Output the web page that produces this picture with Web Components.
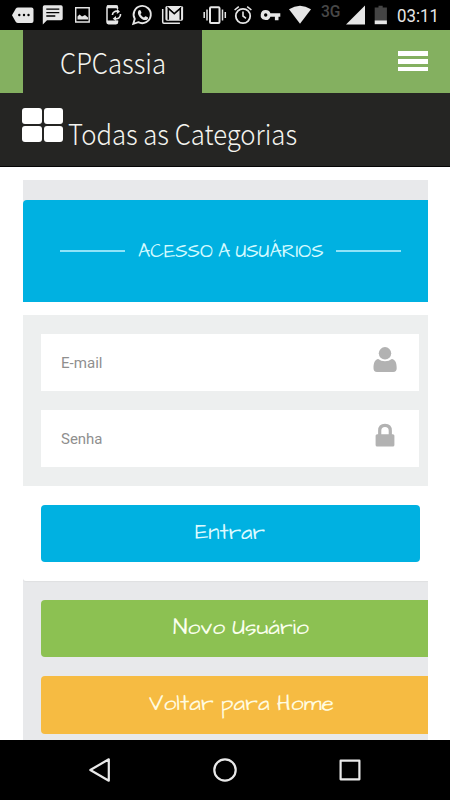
<!DOCTYPE html>
<html lang="pt-BR">
<head>
<meta charset="utf-8">
<title>CPCassia</title>
<style>
html,body{margin:0;padding:0;background:#fff}
body{width:450px;height:800px;overflow:hidden;font-family:Roboto,"Liberation Sans",sans-serif}
</style>
</head>
<body>
<cp-app></cp-app>
<script>
class Base extends HTMLElement {
  constructor() {
    super();
    this.attachShadow({ mode: "open" });
  }
  connectedCallback() {
    this.shadowRoot.innerHTML = "<style>:host{display:block;box-sizing:border-box}svg{display:block;overflow:visible}" + this.css() + "</style>" + this.html();
  }
  css() { return ""; }
  html() { return "<slot></slot>"; }
}

/* One line of text fitted to a width; "base" is the baseline inside the box. */
class FitText extends Base {
  css() {
    return `:host{flex:none;width:${this.getAttribute("w")}px}
    text{fill:currentColor;font-family:inherit;font-size:inherit;font-weight:inherit}`;
  }
  html() {
    const w = this.getAttribute("w"), h = this.getAttribute("h"), b = this.getAttribute("base");
    return `<svg width="${w}" height="${h}"><text x="0" y="${b}" textLength="${w}" lengthAdjust="spacingAndGlyphs">${this.getAttribute("label")}</text></svg>`;
  }
}
customElements.define("fit-text", FitText);

class StatusBar extends Base {
  css() {
    return `:host{display:flex;height:30px;background:#000;color:#e6e6e6;overflow:hidden}
    svg{flex:none;fill:#e6e6e6}.l{fill:none;stroke:#e6e6e6}
    .g{color:#484848;font:500 17px Roboto,sans-serif}.t{color:#e6e6e6;font:400 18.500px Roboto,sans-serif}`;
  }
  html() {
    const i = (x, w, s) => `<svg width="${w}" height="30" viewBox="${x} 0 ${w} 30">${s}</svg>`;
    return i(0, 38, `<path d="M18 7.500h13.500q2 0 2 2v11.500q0 2-2 2H18q-1.500 0-2.300-1.300L12 15.200l3.700-6.400Q16.500 7.500 18 7.500z"/><g fill="#000"><circle cx="19.300" cy="15" r="1.200"/><circle cx="24" cy="15" r="1.200"/><circle cx="28.500" cy="15" r="1.200"/></g>`)
    + i(38, 30, `<path d="M44.500 5.300h16.500q1.700 0 1.700 1.700v11.500q0 1.700-1.700 1.700H47l-4.200 4.300V7q0-1.700 1.700-1.700z"/><path stroke="#000" stroke-width="1.300" d="M46.300 9.200h13M46.300 12.600h13M46.300 16h9"/>`)
    + i(68, 30, `<path class="l" stroke="#aaa" stroke-width="1.400" d="M75.700 7.700h13.500v14.300H75.700z"/><path d="M77.500 19.500v-3l2-2 2.500 2 3-1.500 3 2.500v2z"/>`)
    + i(98, 27, `<path class="l" stroke-width="1.500" d="M117.500 9V7.500q0-1.500-1.500-1.500h-7.500q-1.500 0-1.500 1.500v14.500q0 1.700 1.500 1.700h7.500q1.500 0 1.500-1.700v-1.500"/><path d="M107 5.300h10.500v3H107zM107 20.500h10.500v3H107z"/><path class="l" stroke-width="1.600" d="M112.400 15a4 4 0 0 1 5.500-3.500M120.500 14a4.200 4.200 0 0 1-5.500 4.500"/><path d="m117 8.800 3 3-3.200 2.300zM116 16l-3.300 2.700 3.600 2.600z"/>`)
    + i(125, 32, `<path class="l" stroke-width="1.900" d="m133.300 23.800 1.500-4.900a8.600 8.600 0 1 1 3.500 3.300z"/><path d="M138.600 10.500c.6-.8 1.700-.8 2 .1l.8 1.900c.2.600-.7 1.300-.9 1.700.8 1.500 2 2.600 3.500 3.300.5-.3 1.100-1.500 1.700-1.200l2 1c.7.400.3 1.700-.4 2.200-1.500 1.100-3.500.6-5.500-.6-2-1.400-5.300-5.300-3.200-8.400z"/>`)
    + i(157, 42, `<path class="l" stroke-width="1.500" d="M162.700 9v13q0 1.200 1.200 1.200h16"/><path d="M167 6h14.500q1.600 0 1.600 1.600v11.500q0 1.600-1.600 1.600H167q-1.600 0-1.600-1.600V7.600Q165.400 6 167 6z"/><path fill="none" stroke="#000" stroke-width="1.500" d="M168.300 19.700V8.500l6 5.300 6-5.300v11.200"/><path fill="none" stroke="#000" stroke-width=".7" d="m167 6.800 7.300 6.300 7.300-6.300"/>`)
    + i(199, 32, `<rect class="l" x="210" y="7.300" width="9.500" height="15.600" rx="1" stroke-width="2"/><path class="l" stroke-width="1.500" d="M207 9.500v11M204.200 12v6M222.500 9.500v11M225.300 12v6"/>`)
    + i(231, 27, `<circle class="l" cx="243" cy="16" r="7.200" stroke-width="1.800"/><path class="l" stroke-width="1.600" d="M243 11.500V16l3 2.300M234.600 10l4.200-3.400M251.400 10l-4.200-3.400"/>`)
    + i(258, 26, `<path fill-rule="evenodd" d="M265.700 10a5 5 0 0 1 4.700 3.300h9.900v3.400h-1.800v3.600h-3.600v-3.600h-4.500a5 5 0 1 1-4.700-6.700zm0 3.300a1.700 1.700 0 1 0 0 3.400 1.700 1.700 0 0 0 0-3.400z"/>`)
    + i(284, 37, `<path d="M289 9.300q11-7 22 0L300 23.800z"/>`)
    + `<fit-text class="g" w="19.500" h="30" base="17" label="3G"></fit-text>`
    + i(340.5, 31.5, `<path d="M345.500 24.500 364.500 5.500v19z"/>`)
    + i(372, 24.500, `<path fill="#444" d="M374.700 7.500h3.800V5.700h4.200v1.800h4.200v13H374.700z"/><path d="M374.700 20.400h12.200v3.800h-12.200z"/>`)
    + `<fit-text class="t" w="42" h="30" base="22" label="03:11"></fit-text>`;
  }
}
customElements.define("status-bar", StatusBar);

class SiteHeader extends Base {
  css() {
    return `:host{font-family:"Noto Sans CJK JP","Source Sans Pro","Open Sans",sans-serif;font-weight:200;font-size:28px;color:#f4f4ef}
    .top{height:63px;background:#84b060;display:flex;justify-content:space-between;padding:0 22.500px}
    .brand{width:142px;padding-left:37.500px;background:#252523}
    .menu{width:30px;display:flex;flex-direction:column;gap:3px;padding-top:21px}
    .menu i{height:4.800px;background:#fff}
    .cats{height:74px;background:#252523;border-bottom:1px solid #050505;box-sizing:border-box;display:flex;padding-left:22px}
    .grid{display:grid;grid-template-columns:19.500px 19.500px;grid-template-rows:16px 16px;gap:2.200px;padding-top:15px;width:46px;box-sizing:border-box;align-content:start}
    .grid i{background:#fff;border-radius:3px}`;
  }
  html() {
    return `<div class="top"><div class="brand"><fit-text w="106" h="63" base="44" label="CPCassia"></fit-text></div><div class="menu"><i></i><i></i><i></i></div></div>
    <div class="cats"><div class="grid"><i></i><i></i><i></i><i></i></div><fit-text w="229" h="73" base="52" label="Todas as Categorias"></fit-text></div>`;
  }
}
customElements.define("site-header", SiteHeader);

class PanelTitle extends Base {
  css() {
    return `:host{height:102px;background:#00b1e1;border-radius:4px 0 0 0;color:#d3faff;display:flex;padding-left:37.500px;font-size:19px;word-spacing:-2.500px}
    i{width:65px;height:2px;background:#8fe3f8;margin-top:50px}
    fit-text{margin:0 13px 0 12.500px}`;
  }
  html() { return `<i></i><fit-text w="185.500" h="102" base="56.500" label="ACESSO A USUÁRIOS"></fit-text><i></i>`; }
}
customElements.define("panel-title", PanelTitle);

class FormField extends Base {
  css() {
    return `:host{height:57.300px;background:#fff;display:flex;justify-content:space-between;padding:0 22px 0 20px;color:#8f8f8f;font:400 15px Roboto,sans-serif}
    svg{fill:#b2b2b2}`;
  }
  html() {
    const icon = this.getAttribute("icon") === "user"
      ? `<circle cx="12" cy="19.300" r="6.200"/><path d="M5.200 25Q8 27.300 12 27.300t6.800-2.300c3.500.5 4.900 3.800 4.900 9.300q0 3.700-3.500 3.700H4q-3.500 0-3.500-3.700c0-5.500 1.400-8.800 4.700-9.300z"/>`
      : `<rect x="2.600" y="24.200" width="18.800" height="12.200" rx="1.500"/><path d="M6.700 25v-4.300q0-5.300 5.300-5.300t5.300 5.300V25" fill="none" stroke="#b2b2b2" stroke-width="3.200"/>`;
    return `<fit-text w="${this.getAttribute("w")}" h="57" base="33.800" label="${this.getAttribute("label")}"></fit-text><svg width="24" height="57">${icon}</svg>`;
  }
}
customElements.define("form-field", FormField);

class ActionButton extends Base {
  css() {
    return `:host{height:57.300px;border-radius:4px;background:var(--fill);color:var(--ink,#fff);display:flex;padding-left:var(--inset);font-size:22.500px;word-spacing:-2px}`;
  }
  html() { return `<fit-text w="${this.getAttribute("w")}" h="57" base="34" label="${this.getAttribute("label")}"></fit-text>`; }
}
customElements.define("action-button", ActionButton);

class LoginCard extends Base {
  css() {
    return `:host{margin:13px 22.500px 0;height:560px;padding-top:20px;background:#e8e9eb;overflow:hidden;font-family:"Architects Daughter",Lato,sans-serif}
    .body{background:#fff;padding-top:13px;height:266px;border-radius:0 0 0 3px;box-shadow:0 1px 1px #dfe0e2}
    .fields{height:171px;background:#edefef;box-sizing:border-box;padding:18.800px 8.500px 0 18.500px;display:grid;gap:18.700px;align-content:start}
    .send{padding:19px 7.500px 0 18.500px}
    .extra{display:grid;gap:19px;padding:19px 0 0 18.500px}
    .extra action-button{border-radius:4px 0 0 4px}`;
  }
  html() {
    return `<panel-title></panel-title>
    <div class="body"><div class="fields"><form-field label="E-mail" w="41.500" icon="user"></form-field><form-field label="Senha" w="41.500" icon="lock"></form-field></div>
    <div class="send"><action-button label="Entrar" w="70" style="--fill:#00b1e1;--inset:154px;--ink:#ddfaff"></action-button></div></div>
    <div class="extra"><action-button label="Novo Usuário" w="136" style="--fill:#8cc152;--inset:132px;--ink:#faffed"></action-button>
    <action-button label="Voltar para Home" w="185" style="--fill:#f6bb42;--inset:107.500px;--ink:#fffbe0"></action-button></div>`;
  }
}
customElements.define("login-card", LoginCard);

class NavBar extends Base {
  css() { return `:host{height:60px;background:#000;display:flex;justify-content:center;gap:101px;align-items:center}svg{fill:none;stroke:#e9e9e9;stroke-width:2.200;stroke-linejoin:round}`; }
  html() {
    return `<svg width="24" height="24"><path d="M20.800 1.300v21.400L2.300 12z"/></svg><svg width="24" height="24"><circle cx="12" cy="12" r="10.700"/></svg><svg width="24" height="24"><path d="M2.600 2.700h18.800v18.600H2.600z"/></svg>`;
  }
}
customElements.define("nav-bar", NavBar);

class CpApp extends Base {
  css() { return ":host{width:450px;height:800px;background:#fff;overflow:hidden;display:flow-root}"; }
  html() { return "<status-bar></status-bar><site-header></site-header><login-card></login-card><nav-bar></nav-bar>"; }
}
customElements.define("cp-app", CpApp);
</script>
</body>
</html>
